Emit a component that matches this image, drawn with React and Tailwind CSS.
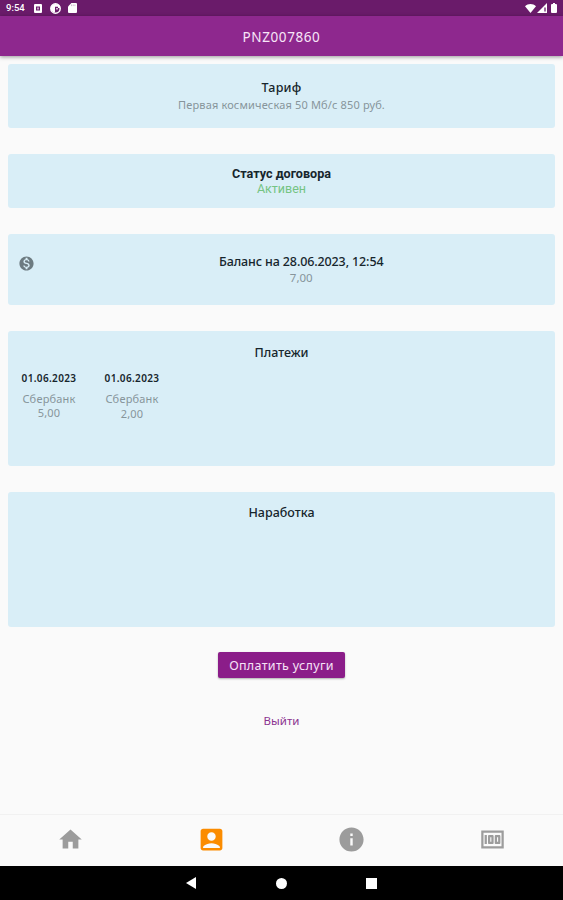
import {
  MdAccountBox,
  MdHome,
  MdInfo,
  MdMoney,
  MdMonetizationOn,
} from "react-icons/md";

const payments = [
  { date: "01.06.2023", source: "Сбербанк", amount: "5,00", gap: "mt-0" },
  { date: "01.06.2023", source: "Сбербанк", amount: "2,00", gap: "mt-px" },
];

const tabs = [
  { id: "home", Icon: MdHome, size: "size-[27px]" },
  { id: "account", Icon: MdAccountBox, size: "size-[29px]" },
  { id: "info", Icon: MdInfo, size: "size-[29px]" },
  { id: "money", Icon: MdMoney, size: "size-[27px]" },
];

function StatusBar() {
  return (
    <div className="flex h-4 items-center justify-between bg-[#6a1b6a] pr-[6px] pl-[6px] text-white">
      <div className="flex items-center">
        <span className="w-[28px] font-['Roboto',sans-serif] text-[9.5px] leading-4 font-medium">
          9:54
        </span>
        <svg className="h-[9px] w-[8px]" viewBox="0 0 8 9" fill="none">
          <rect width="8" height="9" rx="1" fill="currentColor" />
          <path d="M2 2.5h4v4H2z" fill="#6a1b6a" />
          <path d="M3.4 3.5h1.2v2H3.4z" fill="currentColor" />
        </svg>
        <svg className="ml-[8px] h-[11px] w-[11px]" viewBox="0 0 11 11" fill="none">
          <circle cx="5.5" cy="5.5" r="4.7" stroke="currentColor" strokeWidth="1.5" />
          <path d="M1 4C2 .5 8 0 10 3.5V5H8V3.7H5V9.5L3 9 1 7z" fill="currentColor" />
          <path d="M6.3 5h1.4v1.4H6.3z" fill="currentColor" />
        </svg>
        <svg className="ml-[7px] h-[10px] w-[9px]" viewBox="0 0 9 10" fill="none">
          <path d="M3.4 0H8a1 1 0 0 1 1 1v8a1 1 0 0 1-1 1H1a1 1 0 0 1-1-1V3.5z" fill="currentColor" />
          <path d="M3.5 1.5v1.6M5.2 1.5v1.6M6.9 1.5v1.6" stroke="#6a1b6a" strokeWidth=".3" />
        </svg>
      </div>
      <div className="flex items-center">
        <svg className="h-[9px] w-[11px]" viewBox="0 0 11 9">
          <path d="M5.5 9 0 2.3C3-.7 8-.7 11 2.3z" fill="currentColor" />
        </svg>
        <svg className="ml-px h-[10px] w-[10px]" viewBox="0 0 10 10">
          <path d="M0 10 10 0v10z" fill="currentColor" />
          <path d="M7 4.5h2v4H7z" fill="#6a1b6a" opacity=".65" />
        </svg>
        <svg className="ml-[4px] h-[10px] w-[6px]" viewBox="0 0 6 10">
          <path d="M2 0h2v1h1q1 0 1 1v7q0 1-1 1H1q-1 0-1-1V2q0-1 1-1h1z" fill="currentColor" />
        </svg>
      </div>
    </div>
  );
}

function Card({ className, children }) {
  return (
    <section
      className={`rounded-[3px] bg-[#d9eef7] text-center text-[#16252c] ${className}`}
    >
      {children}
    </section>
  );
}

export default function App() {
  return (
    <div className="flex h-[900px] w-[563px] flex-col overflow-hidden bg-[#fafafa] font-['Noto_Sans',sans-serif]">
      <StatusBar />
      <header className="z-10 flex h-10 shrink-0 items-center justify-center bg-[#8e288e] pt-[2px] shadow-[0_1px_4px_rgba(0,0,0,0.4)]">
        <h1 className="text-[13.5px] leading-4 tracking-[0.6px] text-[#f8e6f8]">PNZ007860</h1>
      </header>

      <main className="flex flex-1 flex-col px-2 pt-2">
        <Card className="h-16 pt-4">
          <h2 className="text-[12.5px] leading-4 font-medium tracking-[0.2px]">Тариф</h2>
          <p className="mt-px text-[11px] leading-4 tracking-[0.15px] text-[#87959b]">
            Первая космическая 50 Мб/с 850 руб.
          </p>
        </Card>

        <Card className="mt-[26px] h-[54px] pt-[12px] font-['Roboto',sans-serif]">
          <h2 className="text-[12.6px] leading-[15px] font-bold">Статус договора</h2>
          <p className="text-[12.5px] leading-[15px] text-[#75c483]">Активен</p>
        </Card>

        <Card className="mt-[26px] flex h-[71px] pt-[19px]">
          <MdMonetizationOn className="mt-[2px] ml-[9.5px] size-[17px] text-[#6d7b81]" />
          <div className="flex-1 pl-[13px]">
            <h2 className="pt-px text-[12.5px] leading-4 font-medium tracking-[-0.12px]">
              Баланс на 28.06.2023, 12:54
            </h2>
            <p className="text-[11.5px] leading-4 text-[#87959b]">7,00</p>
          </div>
        </Card>

        <Card className="mt-[26px] h-[135px] pt-[14px]">
          <h2 className="text-[12.5px] leading-4 font-medium">Платежи</h2>
          <div className="mt-[10px] flex gap-[27px] pl-[13px]">
            {payments.map(({ date, source, amount, gap }) => (
              <div key={amount} className="w-14">
                <p className="text-[10px] leading-[14px] font-semibold tracking-[0.35px] whitespace-nowrap">
                  {date}
                </p>
                <p className="mt-[7px] text-[11px] leading-[14px] tracking-[0.2px] text-[#87959b]">
                  {source}
                </p>
                <p className={`text-[11px] leading-[14px] tracking-[0.2px] text-[#87959b] ${gap}`}>
                  {amount}
                </p>
              </div>
            ))}
          </div>
        </Card>

        <Card className="mt-[26px] h-[135px] pt-[13px]">
          <h2 className="text-[12.5px] leading-4 font-medium">Наработка</h2>
        </Card>

        <div className="mt-[25px] flex flex-col items-center">
          <button className="h-[26px] w-[127px] rounded-[2px] bg-[#8b1d89] pt-px text-[12.5px] leading-4 tracking-[0.33px] text-[#f6e2f6] shadow-[0_1px_2px_rgba(0,0,0,0.3)]">
            Оплатить услуги
          </button>
          <button className="mt-[35px] text-[11.5px] leading-4 text-[#8a3390]">Выйти</button>
        </div>
      </main>

      <nav className="flex h-[52px] shrink-0 items-center justify-around border-t border-[#f1f1f1] pb-[2px] text-[#9c9c9c]">
        {tabs.map(({ id, Icon, size }) => (
          <button
            key={id}
            className={`flex flex-1 justify-center ${id === "account" ? "text-[#fb8c00]" : ""}`}
          >
            <Icon className={size} />
          </button>
        ))}
      </nav>

      <div className="flex h-[34px] shrink-0 items-center justify-center gap-[79px] bg-black text-white">
        <svg className="h-3 w-[11px]" viewBox="0 0 11 12" fill="currentColor">
          <path d="M10 0v12L0 6z" />
        </svg>
        <div className="size-[11px] rounded-full bg-white" />
        <div className="size-[11px] bg-white" />
      </div>
    </div>
  );
}
